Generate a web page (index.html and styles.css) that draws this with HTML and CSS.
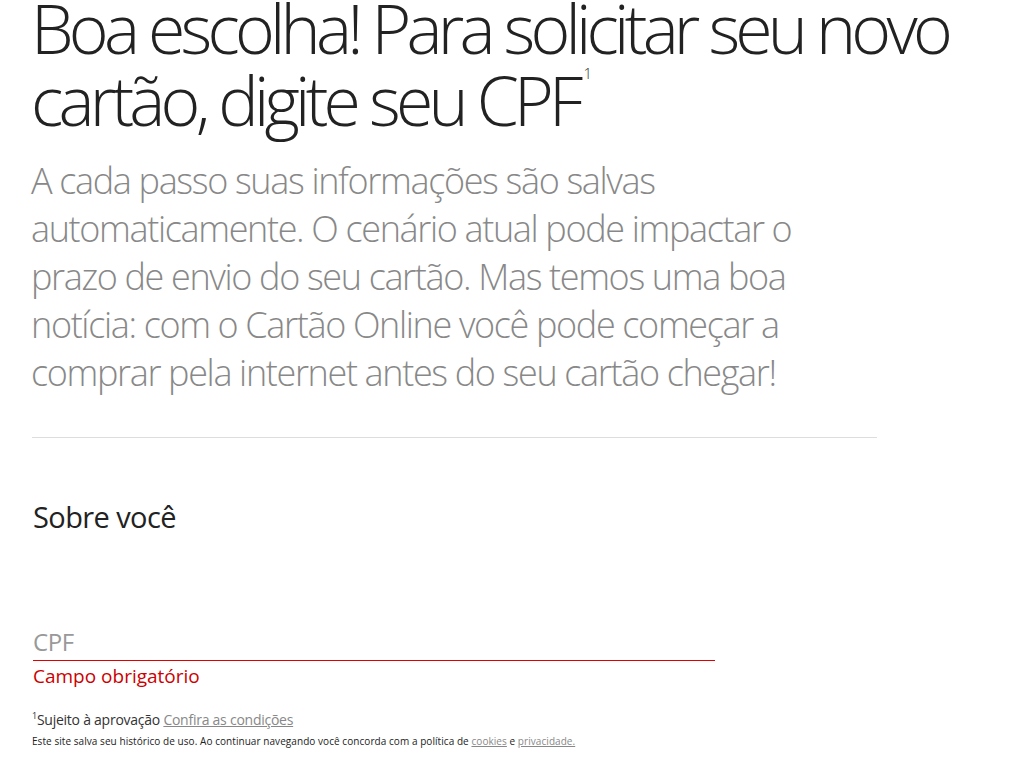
FILE: index.html
```html
<!DOCTYPE html>
<html lang="pt-BR">
<head>
<meta charset="utf-8">
<title>Novo cartão</title>
<link rel="stylesheet" href="styles.css">
</head>
<body>
<main class="page">
  <h1 class="title">Boa escolha! Para solicitar seu novo cartão, digite seu CPF<sup class="title-sup">1</sup></h1>
  <p class="lead">A cada passo suas informações são salvas automaticamente. O cenário atual pode impactar o prazo de envio do seu cartão. Mas temos uma boa notícia: com o Cartão Online você pode começar a comprar pela internet antes do seu cartão chegar!</p>
  <hr class="divider">
  <h2 class="section-title">Sobre você</h2>
  <div class="field">
    <div class="field-control">
      <input class="field-input" type="text" placeholder="CPF">
    </div>
    <div class="field-error">Campo obrigatório</div>
  </div>
  <p class="note"><sup class="note-sup">1</sup>Sujeito à aprovação <a class="note-link" href="#">Confira as condições</a></p>
  <p class="legal">Este site salva seu histórico de uso. Ao continuar navegando você concorda com a política de <a class="legal-link" href="#">cookies</a> e <a class="legal-link" href="#">privacidade.</a></p>
</main>
</body>
</html>
```

FILE: styles.css
```css
html, body {
  margin: 0;
  padding: 0;
  background: #fff;
}
body {
  font-family: "Open Sans", "Liberation Sans", sans-serif;
  color: #222;
}
.page {
  padding: 0 0 0 31px;
  width: 860px;
}
.title {
  margin: -8px 0 0 0;
  font-weight: 300;
  font-size: 68px;
  line-height: 72px;
  letter-spacing: -4.8px;
  color: #222;
  width: 960px;
}
.title-sup {
  font-size: 15px;
  font-weight: 300;
  line-height: 1;
  letter-spacing: 0;
  vertical-align: top;
  color: #333;
  margin-left: 5px;
  padding-top: 2px;
  display: inline-block;
}
.lead {
  margin: 21px 0 0 0;
  font-weight: 300;
  font-size: 36px;
  line-height: 48px;
  letter-spacing: -1.35px;
  color: #888;
  width: 790px;
}
.divider {
  margin: 40px 0 0 1px;
  border: 0;
  border-top: 1px solid #ddd;
  width: 845px;
}
.section-title {
  margin: 61px 0 0 2px;
  font-weight: 400;
  font-size: 29px;
  line-height: 36px;
  letter-spacing: -0.6px;
  color: #222;
}
.field {
  margin: 90px 0 0 2px;
  width: 682px;
}
.field-control {
  border-bottom: 1px solid #e00000;
  padding-bottom: 1px;
}
.field-input {
  display: block;
  width: 100%;
  box-sizing: border-box;
  border: 0;
  padding: 0;
  margin: 0;
  font-family: "Open Sans", "Liberation Sans", sans-serif;
  font-size: 24px;
  line-height: 34px;
  height: 34px;
  color: #222;
  outline: none;
  background: transparent;
}
.field-input::placeholder {
  color: #999;
  letter-spacing: -0.4px;
}
.field-error {
  margin-top: 2px;
  font-size: 19px;
  line-height: 26px;
  color: #cc0000;
}
.note {
  margin: 21px 0 0 1px;
  font-size: 14px;
  line-height: 20px;
  color: #333;
  letter-spacing: -0.25px;
}
.note-sup {
  font-size: 9px;
  line-height: 1;
  vertical-align: top;
  position: relative;
  top: 1px;
}
.note-link {
  color: #888;
}
.legal {
  margin: 3px 0 0 1px;
  font-size: 10px;
  line-height: 16px;
  letter-spacing: 0.06px;
  color: #222;
}
.legal-link {
  color: #888;
}
```
